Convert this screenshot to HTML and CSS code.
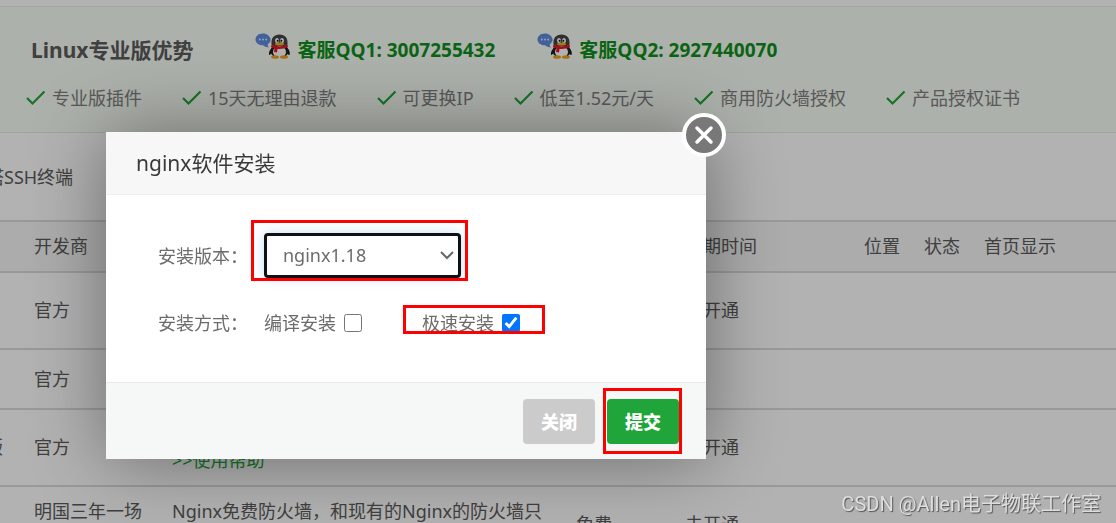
FILE: index.html
```html
<!DOCTYPE html>
<html lang="zh-CN">
<head>
    <meta charset="UTF-8">
    <meta name="viewport" content="width=device-width, initial-scale=1.0">
    <title>软件管理</title>
    <link rel="stylesheet" href="styles.css">
</head>
<body>
    <svg class="sprite" aria-hidden="true">
        <symbol id="tick" viewBox="0 0 20 16">
            <path d="M1 8 L6.500 13.500 L18.500 1.500" fill="none" stroke="#20a53a" stroke-width="2.200"/>
        </symbol>
        <symbol id="qq" viewBox="0 0 36 26">
            <path d="M8 .5 C3 .5 .5 3.500 .5 6.500 C.5 10 4 12.500 8 12.300 C10 14 12 14.500 14 14.500 C12.500 13 12.500 12 13 11 C14.500 10 15.800 8.500 15.600 6 C15 3 12 .5 8 .5Z" fill="#5f8cdd"/>
            <circle cx="4.800" cy="6.500" r="1" fill="#d8e6ff"/>
            <circle cx="8" cy="6.500" r="1" fill="#d8e6ff"/>
            <circle cx="11.200" cy="6.500" r="1" fill="#d8e6ff"/>
            <path d="M18 14 C15 16 13.500 19 14 22 C15 22 16 21 17 19Z M31 14 C34 16 35.500 19 34.500 22 C33 22 32.500 21 31.500 19Z" fill="#171717"/>
            <ellipse cx="24.500" cy="18" rx="9" ry="7" fill="#222"/>
            <ellipse cx="24.500" cy="19" rx="6.500" ry="6" fill="#fff"/>
            <path d="M16.500 11 C16 5 19 1.500 24.500 1.500 C30 1.500 33 5 32.500 11 C32.500 14 16.500 14 16.500 11Z" fill="#444"/>
            <ellipse cx="22" cy="7.500" rx="2" ry="2.500" fill="#fff"/>
            <ellipse cx="27" cy="7.500" rx="2" ry="2.500" fill="#fff"/>
            <circle cx="22.600" cy="7.800" r="1" fill="#111"/>
            <circle cx="26.400" cy="7.800" r="1" fill="#111"/>
            <ellipse cx="24.500" cy="11" rx="4.500" ry="1.500" fill="#f2ae1c"/>
            <path d="M16.500 11.500 Q24.500 15.500 32.500 11.500 L33 14 Q28 16.500 22.500 16 L22 19.500 L19 19 L19.500 15.500 Q17 15 16 14Z" fill="#e8152a"/>
            <ellipse cx="20" cy="24" rx="4" ry="1.800" fill="#f2a21c"/>
            <ellipse cx="29" cy="24" rx="4" ry="1.800" fill="#f2a21c"/>
        </symbol>
    </svg>

    <div class="page">
        <section class="promo">
            <div class="promo-head">
                <h2>Linux专业版优势</h2>
                <a class="service" href="#"><svg class="qq"><use href="#qq"/></svg>客服QQ1: 3007255432</a>
                <a class="service" href="#"><svg class="qq"><use href="#qq"/></svg>客服QQ2: 2927440070</a>
            </div>
            <ul class="features">
                <li><svg class="tick"><use href="#tick"/></svg>专业版插件</li>
                <li><svg class="tick"><use href="#tick"/></svg>15天无理由退款</li>
                <li><svg class="tick"><use href="#tick"/></svg>可更换IP</li>
                <li><svg class="tick"><use href="#tick"/></svg>低至1.52元/天</li>
                <li><svg class="tick"><use href="#tick"/></svg>商用防火墙授权</li>
                <li><svg class="tick"><use href="#tick"/></svg>产品授权证书</li>
            </ul>
        </section>

        <div class="recent">塔SSH终端</div>

        <table class="soft-list">
            <colgroup>
                <col class="col-name">
                <col class="col-dev">
                <col class="col-desc">
                <col class="col-price">
                <col class="col-time">
                <col class="col-place">
                <col class="col-state">
                <col>
            </colgroup>
            <thead>
                <tr>
                    <th></th>
                    <th>开发商</th>
                    <th></th>
                    <th></th>
                    <th>到期时间</th>
                    <th>位置</th>
                    <th>状态</th>
                    <th>首页显示</th>
                </tr>
            </thead>
            <tbody>
                <tr class="tall">
                    <td></td><td>官方</td><td></td><td></td><td>未开通</td><td></td><td></td><td></td>
                </tr>
                <tr>
                    <td></td><td>官方</td><td></td><td></td><td></td><td></td><td></td><td></td>
                </tr>
                <tr class="tall">
                    <td>版</td><td>官方</td><td class="help"><a href="#">&gt;&gt;使用帮助</a></td><td></td><td>未开通</td><td></td><td></td><td></td>
                </tr>
                <tr class="tall">
                    <td></td><td class="first-line">明国三年一场</td><td class="first-line">Nginx免费防火墙，和现有的Nginx的防火墙只</td><td>免费</td><td>未开通</td><td></td><td></td><td></td>
                </tr>
            </tbody>
        </table>
    </div>

    <div class="shade"></div>

    <form class="dialog" role="dialog" aria-labelledby="dialogTitle">
        <button type="button" class="dialog-close" aria-label="关闭窗口">
            <svg viewBox="0 0 36 36"><path d="M11 11 L25 25 M25 11 L11 25" stroke="#fff" stroke-width="3.500" stroke-linecap="round"/></svg>
        </button>
        <h3 id="dialogTitle" class="dialog-title">nginx软件安装</h3>
        <div class="dialog-body">
            <div class="line">
                <label class="line-name" for="version">安装版本：</label>
                <div class="select-wrap">
                    <select id="version">
                        <option>nginx1.18</option>
                    </select>
                    <svg class="arrow" viewBox="0 0 14 10"><path d="M1 2 L7 8 L13 2" fill="none" stroke="#666" stroke-width="2"/></svg>
                    <span class="mark mark-select"></span>
                </div>
            </div>
            <div class="line">
                <span class="line-name">安装方式：</span>
                <label class="check">编译安装<input type="checkbox"></label>
                <label class="check">极速安装<input type="checkbox" checked><span class="mark mark-check"></span></label>
            </div>
        </div>
        <div class="dialog-foot">
            <button type="button" class="btn">关闭</button>
            <button type="button" class="btn btn-success">提交<span class="mark mark-submit"></span></button>
        </div>
    </form>

    <div class="watermark">CSDN @Allen电子物联工作室</div>
</body>
</html>
```
FILE: styles.css
```css
* {
    box-sizing: border-box;
}
body {
    margin: 0;
    height: 100vh;
    overflow: hidden;
    background: #fff;
    color: #5c5c5c;
    font-family: "Noto Sans", "Noto Sans CJK SC", sans-serif;
    font-size: 18px;
    line-height: 26px;
}
a {
    color: #20a53a;
    text-decoration: none;
}
button, select {
    font-family: inherit;
    font-size: 18px;
}
.sprite {
    position: absolute;
    width: 0;
    height: 0;
}

/* promo bar */
.promo {
    margin-top: 6px;
    padding: 30px 26px 21px;
    border-top: 1px solid #eee;
    border-bottom: 1px solid #e6ebe6;
    background: #f8fef5;
}
.promo-head {
    display: flex;
    align-items: center;
    height: 26px;
    padding-left: 5px;
}
.promo-head h2 {
    margin: 0 62px 0 0;
    font-size: 21px;
    font-weight: bold;
}
.service {
    display: flex;
    align-items: center;
    margin-right: 42px;
    color: #109020;
    font-size: 19px;
    font-weight: bold;
    white-space: nowrap;
}
.qq {
    width: 36px;
    height: 26px;
    margin: 0 6px 8px 0;
}
.features {
    display: flex;
    gap: 40px;
    margin: 22px 0 0;
    padding: 0;
    list-style: none;
    color: #808080;
    white-space: nowrap;
}
.features li {
    display: flex;
    align-items: center;
}
.tick {
    width: 20px;
    height: 16px;
    margin-right: 6px;
}
.recent {
    height: 87px;
    margin-left: -14px;
    padding-top: 31px;
}

/* software list */
.soft-list {
    width: calc(100% + 30px);
    margin-left: -30px;
    border-collapse: separate;
    border-spacing: 0;
    border-top: 2px solid #dcdcdc;
    table-layout: fixed;
}
.soft-list th,
.soft-list td {
    height: 60px;
    padding: 0 0 1px 15px;
    border-bottom: 2px solid #dcdcdc;
    font-weight: normal;
    text-align: left;
    white-space: nowrap;
}
.soft-list th {
    height: 51px;
    background: #f7f7f7;
}
.soft-list .tall td {
    height: 77px;
}
.soft-list .help {
    padding-bottom: 12px;
    vertical-align: bottom;
}
.soft-list .first-line {
    padding-top: 11px;
    vertical-align: top;
}
.col-name {
    width: 49px;
}
.col-dev {
    width: 138px;
}
.col-desc {
    width: 404px;
}
.col-price {
    width: 109px;
}
.col-time {
    width: 179px;
}
.col-place,
.col-state {
    width: 60px;
}

/* install dialog */
.shade {
    position: fixed;
    inset: 0;
    background: rgba(0,0,0,0.3);
}
.dialog {
    position: absolute;
    top: 132px;
    left: 106px;
    width: 600px;
    background: #fff;
    border-radius: 2px;
    box-shadow: 1px 1px 75px rgba(0,0,0,0.4);
    color: #6c6c6c;
}
.dialog-close {
    position: absolute;
    top: -19px;
    right: -20px;
    width: 44px;
    height: 44px;
    padding: 0;
    border: 4px solid #fff;
    border-radius: 50%;
    background: #787878;
    cursor: pointer;
}
.dialog-close svg {
    display: block;
}
.dialog-title {
    margin: 0;
    padding: 18px 30px;
    border-bottom: 1px solid #eee;
    background: #f7f7f7;
    color: #3a3a3a;
    font-size: 21px;
    font-weight: normal;
}
.dialog-body {
    padding: 38px 30px 37px;
}
.line {
    display: flex;
    align-items: center;
    height: 45px;
}
.line + .line {
    margin-top: 22px;
}
.line-name {
    width: 128px;
    padding-left: 22px;
    white-space: nowrap;
}
.select-wrap {
    position: relative;
}
select {
    display: block;
    width: 197px;
    height: 45px;
    padding: 0 16px 2px;
    border: 3px solid #111;
    border-radius: 4px;
    appearance: none;
    background: #fff;
    box-shadow: 0 0 12px rgba(102,175,233,0.4);
    color: #6c6c6c;
}
.arrow {
    position: absolute;
    top: 17px;
    right: 7px;
    width: 14px;
    height: 10px;
    pointer-events: none;
}
.check {
    position: relative;
    display: flex;
    align-items: center;
    margin-right: 60px;
    white-space: nowrap;
}
.check input {
    width: 18px;
    height: 18px;
    margin: 0 0 0 8px;
}
.dialog-foot {
    display: flex;
    justify-content: flex-end;
    gap: 12px;
    padding: 16px 27px 15px;
    border-top: 1px solid #e8eaea;
    background: #f6f8f8;
}
.btn {
    position: relative;
    width: 72px;
    height: 45px;
    padding: 0 0 2px;
    border: none;
    border-radius: 4px;
    background: #cbcbcb;
    color: #fff;
    font-weight: 800;
    cursor: pointer;
}
.btn-success {
    background: #20a53a;
}

/* red step marks */
.mark {
    position: absolute;
    border: 3px solid #f00;
    pointer-events: none;
}
.mark-select {
    inset: -13px -7px -3px -13px;
}
.mark-check {
    inset: -5px -25px 2px -19px;
}
.mark-submit {
    inset: -11px -3px -10px -4px;
}

.watermark {
    position: fixed;
    right: 15px;
    bottom: 6px;
    color: #dedede;
    font-family: Roboto, "Noto Sans CJK SC", sans-serif;
    font-size: 20px;
    text-shadow: 1px 1px 1px #555;
}
```
